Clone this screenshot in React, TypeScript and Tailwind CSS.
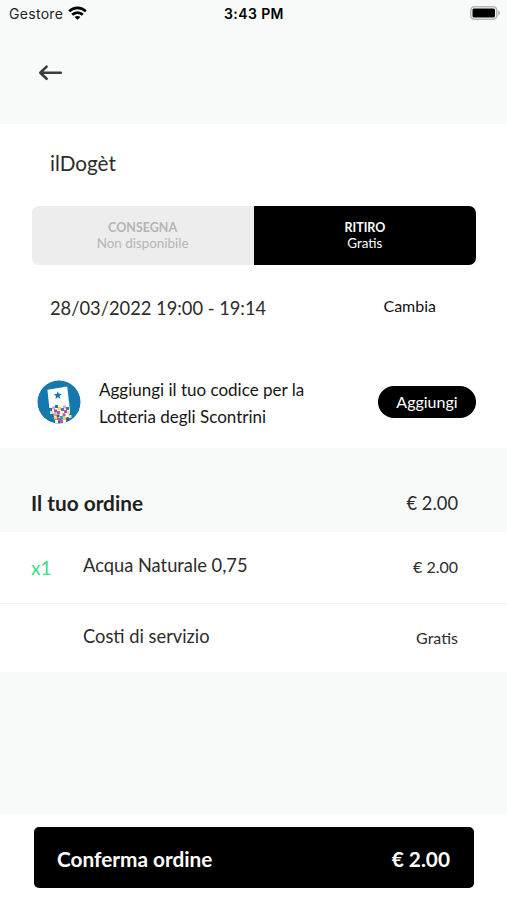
import React from 'react'

interface OrderLine {
  quantity: string
  name: string
  price: string
}

const orderLines: OrderLine[] = [
  { quantity: 'x1', name: 'Acqua Naturale 0,75', price: '€ 2.00' },
  { quantity: '', name: 'Costi di servizio', price: 'Gratis' }
]

// x, y, colour of the confetti at the bottom of the receipt
const confetti: [number, number, string][] = [
  [18, 25, '#1679ae'],
  [26, 25.5, '#e2a0c4'],
  [12, 28, '#1679ae'],
  [15, 26.5, '#d9a0c8'],
  [21, 27, '#f3d34a'],
  [24, 28, '#4a78b0'],
  [29, 27, '#2a7fb8'],
  [13, 31, '#e8d9a0'],
  [17, 29.5, '#7a5dab'],
  [20, 31, '#e2478f'],
  [23, 32, '#f6efd0'],
  [27, 30, '#d9479b'],
  [30, 31, '#f3e08a'],
  [14, 34, '#1679ae'],
  [16.5, 33, '#f0a08c'],
  [19.5, 34.5, '#4a4f8a'],
  [25.5, 33.5, '#8f5fb0'],
  [29, 34, '#ffffff'],
  [17, 36.5, '#f3d34a'],
  [20, 38, '#e2478f'],
  [23, 36, '#2aa9c9'],
  [26, 37, '#f3d34a'],
  [29, 37.5, '#4a4f8a'],
  [18, 40, '#ffffff'],
  [23, 40, '#c05aa8'],
  [26, 40, '#ffffff'],
  [31.5, 35, '#f3e08a']
]

const StatusBar: React.FC = () => (
  <div className="grid h-[26px] grid-cols-3 items-center pr-[6px] pl-[9px] font-['Inter',sans-serif] text-black">
    <div className="flex items-center gap-[5px]">
      <span className="text-[14px] tracking-[0.3px] text-[#222]">Gestore</span>
      <svg className="h-[14px] w-[19px]" viewBox="0 0 19 14" fill="none" stroke="currentColor" strokeWidth="2.7">
        <path d="M1.2 5.4C5.8.7 13.2.7 17.8 5.4" />
        <path d="M4.2 8.8c2.9-2.9 7.7-2.9 10.6 0" />
        <path d="M9.5 13.8 6.6 11c1.6-1.5 4.2-1.5 5.8 0Z" fill="currentColor" stroke="none" />
      </svg>
    </div>
    <span className="pr-[2px] text-center text-[14px] font-semibold tracking-[0.4px]">3:43 PM</span>
    <svg className="h-[14px] w-[31px] justify-self-end" viewBox="0 0 31 14">
      <rect x=".75" y=".75" width="26" height="12.5" rx="3.5" fill="#f8faf9" stroke="#b5b5b5" strokeWidth="1.5" />
      <rect x="2.5" y="2.5" width="22.5" height="9" rx="1.5" fill="#000" />
      <path d="M28.2 4.5c2.4 1 2.4 4 0 5Z" fill="#b5b5b5" />
    </svg>
  </div>
)

const LotteryBadge: React.FC = () => (
  <svg className="h-11 w-11 shrink-0" viewBox="0 0 44 44">
    <clipPath id="badge">
      <circle cx="22" cy="22" r="21.7" />
    </clipPath>
    <g clipPath="url(#badge)">
      <circle cx="22" cy="22" r="21.7" fill="#1679ae" />
      <path d="M10.4 9.7 30.2 6.5 33 30.5 29 40 17 38 12.5 29Z" fill="#fff" />
      <path
        d="m20.7 11.2 1.2 2.6 2.8.1-2.1 2 .8 2.8-2.5-1.5-2.4 1.7.5-2.9-2.3-1.7 2.9-.4Z"
        fill="#1679ae"
      />
      {confetti.map(([x, y, fill], i) => (
        <rect key={i} x={x} y={y} width="3" height="3" fill={fill} />
      ))}
    </g>
  </svg>
)

const App: React.FC = () => {
  return (
    <div className="flex h-[900px] w-[507px] flex-col bg-[#f7faf9] font-['Lato',sans-serif] text-[#2c2c2c]">
      <header className="h-[124px]">
        <StatusBar />
        <button className="mt-[38px] ml-[38px] block">
          <svg
            className="h-[18px] w-[25px]"
            viewBox="0 0 25 18"
            fill="none"
            stroke="#3b3d3d"
            strokeWidth="2.6"
            strokeLinecap="round"
            strokeLinejoin="round"
          >
            <path d="M8.6 2.6 2.3 8.8l6.3 6M2.6 8.8h20.2" />
          </svg>
        </button>
      </header>

      <section className="h-[324px] bg-white">
        <h1 className="pt-[25px] pl-[50px] text-[20.7px] leading-7">ilDogèt</h1>
        <div className="mt-[29px] mr-[31px] ml-[31.5px] grid h-[58.5px] grid-cols-2 overflow-hidden rounded-[7px] text-center text-[13.4px] leading-4">
          <div className="bg-[#ededed] pt-[14px] text-[#b5b5b5]">
            <p className="text-[12.5px] font-bold">CONSEGNA</p>
            <p className="-mt-px">Non disponibile</p>
          </div>
          <div className="bg-black pt-[14px] text-white">
            <p className="text-[12.5px] font-bold">RITIRO</p>
            <p className="-mt-px">Gratis</p>
          </div>
        </div>
        <div className="mt-[29.5px] flex justify-between pr-[71px] pl-[50px]">
          <span className="text-[18.3px] leading-7">28/03/2022 19:00 - 19:14</span>
          <span className="text-[16px] leading-6 text-[#111]">Cambia</span>
        </div>
        <div className="mt-[51px] flex items-center pr-[31px] pl-[37px] text-[#161616]">
          <LotteryBadge />
          <p className="ml-[18px] flex-1 pt-[3px] text-[17px] leading-[27px]">
            Aggiungi il tuo codice per la
            <br />
            Lotteria degli Scontrini
          </p>
          <button className="h-8 w-[98px] rounded-full bg-black text-[16px] text-white">Aggiungi</button>
        </div>
      </section>

      <section>
        <div className="flex h-[84px] items-end justify-between pr-[49px] pb-[15px] pl-[31px] leading-7">
          <h2 className="text-[20.8px] font-bold text-[#1f1f1f]">Il tuo ordine</h2>
          <span className="text-[18.3px]">€ 2.00</span>
        </div>
        {orderLines.map((line) => (
          <div
            key={line.name}
            className="group flex h-[72px] border-b border-[#f1f3f2] bg-white pr-[49px] pl-[31px] last:h-[68px] last:border-0"
          >
            <span className="w-[52px] pt-[22px] text-[19px] leading-7 text-[#3fd98a]">{line.quantity}</span>
            <span className="flex-1 pt-[19px] text-[18.3px] leading-7 group-last:pt-[18px]">{line.name}</span>
            <span className="pt-[21px] text-[16px] leading-7 group-last:pt-5">{line.price}</span>
          </div>
        ))}
      </section>

      <footer className="mt-auto h-[86px] bg-white pt-[13px] pr-[33px] pl-[34px]">
        <button className="flex h-[61px] w-full items-center justify-between rounded-[5px] bg-black pt-[3px] pr-6 pl-[23px] text-[20.8px] font-bold text-white">
          <span>Conferma ordine</span>
          <span>€ 2.00</span>
        </button>
      </footer>
    </div>
  )
}

export default App
